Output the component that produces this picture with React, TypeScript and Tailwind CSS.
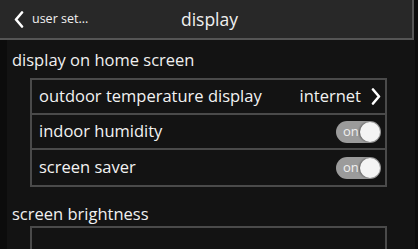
function Toggle() {
  return (
    <div className="relative flex h-[22px] w-[45px] items-center rounded-full bg-[#9b9b9b]">
      <span className="pl-[7px] text-[13px] leading-none text-[#f0f0f0]">on</span>
      <span className="absolute right-[1px] top-[1px] h-[20px] w-[20px] rounded-full bg-[#f4f4f4] shadow-[-1px_0_2px_rgba(0,0,0,0.4)]" />
    </div>
  );
}

function Chevron({ dir }: { dir: 'left' | 'right' }) {
  return (
    <svg width="10" height="17" viewBox="0 0 10 17" fill="none" stroke="white" strokeWidth="2.6" strokeLinecap="round" strokeLinejoin="round">
      {dir === 'left' ? <polyline points="8,1.5 2,8.5 8,15.5" /> : <polyline points="2,1.5 8,8.5 2,15.5" />}
    </svg>
  );
}

function Row({ label, children, last }: { label: string; children: React.ReactNode; last?: boolean }) {
  return (
    <div className={`flex h-[35px] items-center justify-between pl-[7px] pr-[4px] ${last ? '' : 'border-b-2 border-[#4a4a4a]'}`}>
      <span className="text-[16.5px] text-[#f2f2f2]">{label}</span>
      {children}
    </div>
  );
}

export default function App() {
  return (
    <div
      className="flex h-[249px] w-[418px] overflow-hidden bg-[#0c0c0c]"
      style={{ fontFamily: '"Open Sans", "Noto Sans", sans-serif' }}
    >
      <div className="flex w-[415px] flex-col">
        {/* Header */}
        <div className="flex h-[40px] w-[414px] shrink-0 items-center border-b-2 border-r-2 border-[#555] bg-[#282828]">
          <div className="flex w-[140px] items-center pl-[14px]">
            <Chevron dir="left" />
            <span className="ml-[8px] text-[12.5px] text-[#f0f0f0]">user set...</span>
          </div>
          <div className="flex-1 pr-[133px] text-center text-[17.5px] text-[#f0f0f0]">display</div>
        </div>

        {/* Body */}
        <div className="ml-[7px] flex flex-1 flex-col bg-[#131313]">
          <div className="pl-[5px] pt-[10px] text-[16.5px] leading-[20px] text-[#f0f0f0]">display on home screen</div>
          <div className="ml-[23px] mt-[8px] w-[357px] border-2 border-[#4a4a4a]">
            <Row label="outdoor temperature display">
              <div className="flex items-center">
                <span className="text-[16.5px] text-[#f2f2f2]">internet</span>
                <span className="ml-[10px] flex">
                  <Chevron dir="right" />
                </span>
              </div>
            </Row>
            <Row label="indoor humidity">
              <Toggle />
            </Row>
            <Row label="screen saver" last>
              <Toggle />
            </Row>
          </div>
          <div className="pl-[5px] pt-[17px] text-[16.5px] leading-[20px] text-[#f0f0f0]">screen brightness</div>
          <div className="ml-[23px] mt-[2px] h-[40px] w-[357px] border-2 border-[#4a4a4a]" />
        </div>
      </div>
    </div>
  );
}
